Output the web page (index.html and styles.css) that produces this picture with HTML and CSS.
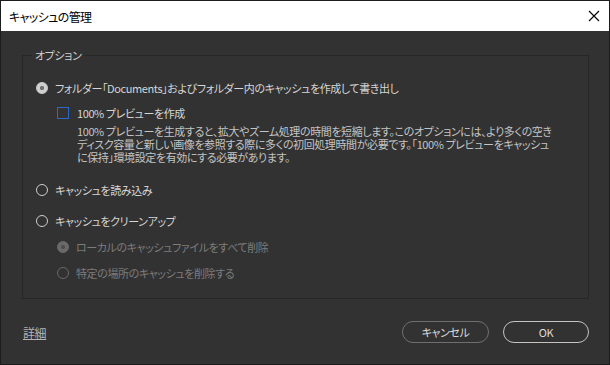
FILE: index.html
```html
<!DOCTYPE html>
<html lang="ja">
<head>
    <meta charset="UTF-8">
    <title>キャッシュの管理</title>
    <link rel="stylesheet" href="styles.css">
</head>
<body>
    <div class="dialog">
        <div class="titlebar">
            <span class="title">キャッシュの管理</span>
            <svg class="close" width="12" height="12" viewBox="0 0 12 12">
                <path d="M1 1 L11 11 M11 1 L1 11" stroke="#000" stroke-width="1.1" fill="none"/>
            </svg>
        </div>

        <div class="content">
            <fieldset class="group">
                <legend>オプション</legend>

                <div class="option">
                    <span class="radio checked"></span>
                    <span>フォルダー「Documents」およびフォルダー内のキャッシュを作成して書き出し</span>
                </div>

                <div class="sub">
                    <div class="option">
                        <span class="checkbox"></span>
                        <span>100% プレビューを作成</span>
                    </div>
                    <p class="desc">
                        100% プレビューを生成すると、拡大やズーム処理の時間を短縮します。このオプションには、より多くの空き<br>
                        ディスク容量と新しい画像を参照する際に多くの初回処理時間が必要です。「100% プレビューをキャッシュ<br>
                        に保持」環境設定を有効にする必要があります。
                    </p>
                </div>

                <div class="option gap-lg">
                    <span class="radio"></span>
                    <span>キャッシュを読み込み</span>
                </div>

                <div class="option gap-md">
                    <span class="radio"></span>
                    <span>キャッシュをクリーンアップ</span>
                </div>

                <div class="sub">
                    <div class="option disabled gap-sm">
                        <span class="radio checked"></span>
                        <span>ローカルのキャッシュファイルをすべて削除</span>
                    </div>
                    <div class="option disabled gap-sm">
                        <span class="radio"></span>
                        <span>特定の場所のキャッシュを削除する</span>
                    </div>
                </div>
            </fieldset>

            <div class="footer">
                <a class="details" href="#">詳細</a>
                <div class="buttons">
                    <button class="btn">キャンセル</button>
                    <button class="btn primary">OK</button>
                </div>
            </div>
        </div>
    </div>
</body>
</html>
```

FILE: styles.css
```css
body {
    margin: 0;
    padding: 0;
    background-color: #323232;
    font-family: "Noto Sans CJK JP", "Noto Sans", sans-serif;
    font-size: 11px;
    letter-spacing: -0.4px;
    font-feature-settings: "palt";
}

.dialog {
    width: 610px;
    height: 365px;
    box-sizing: border-box;
    border: 1px solid #1c1c1c;
    background-color: #323232;
}

.titlebar {
    height: 30px;
    background-color: #fff;
    display: flex;
    align-items: center;
    justify-content: space-between;
    padding: 0 9px 0 8px;
}

.title {
    color: #000;
    font-size: 12px;
    letter-spacing: -0.6px;
}

.close {
    display: block;
}

.content {
    padding: 16px 20px 0 21px;
}

.group {
    margin: 0;
    padding: 15px 0 15px 13px;
    border: 1px solid #262626;
    color: #d6d6d6;
}

.group legend {
    margin-left: -4px;
    padding: 0 3px;
    line-height: 16px;
    color: #d0d0d0;
}

.option {
    display: flex;
    align-items: center;
    height: 20px;
    white-space: nowrap;
}

.radio,
.checkbox {
    width: 12px;
    height: 12px;
    box-sizing: border-box;
    flex-shrink: 0;
    margin-right: 7px;
}

.radio {
    border-radius: 50%;
    border: 1.5px solid #cdcdcd;
}

.radio.checked {
    background: radial-gradient(circle, #707070 0, #707070 1.8px, #cfcfcf 2.4px);
    border-color: #cfcfcf;
}

.checkbox {
    border: 1px solid #2c68c4;
    margin-right: 8px;
}

.sub {
    margin-left: 21px;
}

.sub .option {
    margin-top: 5px;
}

.desc {
    margin: 2px 0 0 20px;
    line-height: 13px;
    color: #c4c4c4;
    white-space: nowrap;
}

.option.gap-lg {
    margin-top: 16px;
}

.option.gap-md {
    margin-top: 11px;
}

.sub .option.gap-sm {
    margin-top: 6px;
}

.disabled {
    color: #7c7c7c;
}

.disabled .radio {
    border-color: #676767;
}

.disabled .radio.checked {
    background: radial-gradient(circle, #4e4e4e 0, #4e4e4e 1.8px, #6a6a6a 2.4px);
    border-color: #6a6a6a;
}

.footer {
    display: flex;
    align-items: center;
    justify-content: space-between;
    margin-top: 22px;
    height: 22px;
}

.details {
    color: #b4b4b4;
    text-decoration: underline;
    margin-left: 1px;
    font-size: 12px;
}

.buttons {
    display: flex;
    gap: 14px;
}

.btn {
    height: 22px;
    width: 87px;
    border-radius: 11px;
    background: transparent;
    border: 1px solid #6f6f6f;
    color: #dcdcdc;
    font-family: "Noto Sans CJK JP", "Noto Sans", sans-serif;
    font-size: 11px;
    letter-spacing: -0.4px;
    font-feature-settings: "palt";
    padding: 0;
}

.btn.primary {
    width: 86px;
    border-color: #c4c4c4;
}
```
